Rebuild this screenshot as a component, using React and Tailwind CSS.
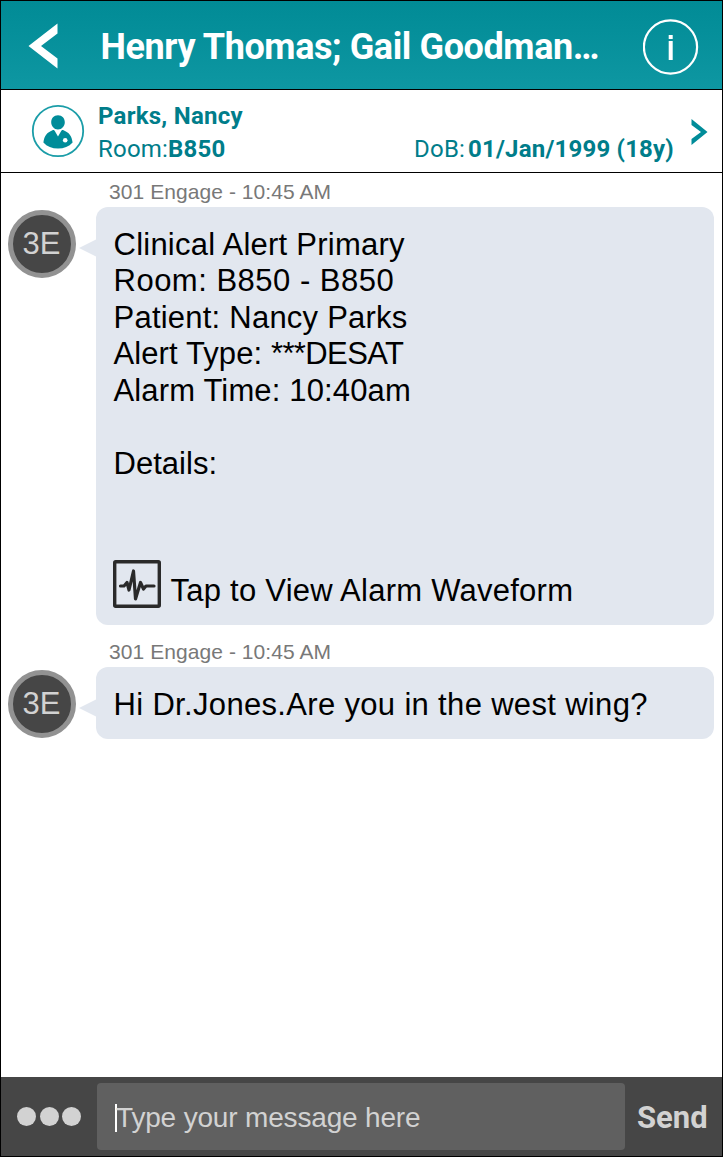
import React from 'react';

const alertLines = [
  { text: 'Clinical Alert Primary', tracking: 'tracking-[0.24px]' },
  { text: 'Room: B850 - B850', tracking: 'tracking-[0.5px]' },
  { text: 'Patient: Nancy Parks', tracking: 'tracking-[0.23px]' },
  { text: 'Alert Type: ', value: '***DESAT', tracking: 'tracking-[0.1px]' },
  { text: 'Alarm Time: 10:40am', tracking: 'tracking-[0.15px]' },
  { text: '\u00a0', tracking: '' },
  { text: 'Details:', tracking: 'tracking-[0.02px]' },
];

const PatientIcon = () => (
  <svg width="54" height="54" viewBox="0 0 54 54" className="shrink-0">
    <circle cx="27" cy="27" r="25.2" fill="none" stroke="#1b9da8" strokeWidth="1.8" />
    <path d="M27 11.2c4.200 0 6.800 3 6.800 7 0 4-3 7.200-6.800 7.200s-6.800-3.200-6.800-7.200c0-4 2.600-7 6.800-7z" fill="#008c99" />
    <path
      d="M21.500 26.200c1.200-.5 2 .1 2.600 1.200l2.900 5 2.900-5c.6-1.100 1.400-1.700 2.600-1.200 5.600 2.200 8.200 5.600 9.100 12.300-3.600 4-8.600 6.100-14.600 6.100s-11-2.100-14.600-6.100c.9-6.700 3.500-10.100 9.100-12.300z"
      fill="#008c99"
    />
    <circle cx="34.200" cy="36.300" r="2.300" fill="#fff" />
  </svg>
);

const WaveformIcon = () => (
  <svg width="48" height="48" viewBox="0 0 48 48" fill="none" stroke="#2a2a2a" className="-ml-px shrink-0">
    <rect x="1.700" y="1.700" width="44.600" height="44.600" rx="1" strokeWidth="3.400" />
    <path
      d="M7.500 26h3.500l3-3.500 2 7.500 4.500-19 2 28 5-16.500 3 6.500 2.500-3h8"
      strokeWidth="3.200"
      strokeLinecap="round"
      strokeLinejoin="round"
    />
  </svg>
);

const Message = ({ children }) => (
  <article>
    <div className="h-[34px] pl-[108px] text-[21px] leading-[38px] tracking-[0.07px] text-[#787878]">
      301 Engage - 10:45 AM
    </div>
    <div className="flex items-start pl-[6.500px]">
      <div className="mt-[2.500px] flex size-[68px] shrink-0 items-center justify-center rounded-full border-[5px] border-[#929292] bg-[#464646] pt-0.5 text-[31px] text-[#d2d2d2]">
        3E
      </div>
      <svg width="17" height="18" viewBox="0 0 17 18" className="mt-8 ml-[3.500px] shrink-0">
        <path d="M17 0.500L0 9l17 8.500z" fill="#e2e7ef" />
      </svg>
      <div className="w-[618px] rounded-xl bg-[#e2e7ef] pl-[17.500px] text-[31px] leading-[36.5px] text-black">
        {children}
      </div>
    </div>
  </article>
);

export default function App() {
  return (
    <div className="flex h-[1157px] w-[723px] flex-col overflow-hidden border border-black bg-white font-['Liberation_Sans',sans-serif]">
      <header className="flex h-[89px] shrink-0 items-center border-b border-black bg-linear-to-b from-[#018b96] to-[#0e97a2] font-[Roboto,sans-serif] text-white">
        <svg width="30" height="46" viewBox="0 0 30 46" className="mt-0.5 ml-[27px] shrink-0">
          <path d="M29.500 0.500v10L13 23l16.500 12.500v10L0.500 23z" fill="#fff" />
        </svg>
        <h1 className="mt-1 ml-[42.500px] w-[542.500px] text-[36px] leading-none font-bold tracking-[-0.4px] whitespace-nowrap">
          Henry Thomas; Gail Goodman…
        </h1>
        <svg width="56" height="56" viewBox="0 0 56 56" fill="none" className="mt-1 shrink-0">
          <circle cx="27.500" cy="28" r="26.600" stroke="#fff" strokeWidth="2.200" />
          <path d="M25.700 16h4v4h-4zM25.700 22h4v19h-4z" fill="#fff" />
        </svg>
      </header>

      <section className="flex h-[83px] shrink-0 items-center border-b border-black pl-[30px] font-[Roboto,sans-serif] text-[24px] text-[#007d8a]">
        <PatientIcon />
        <div className="mt-[3px] ml-[13px] w-[576px] leading-[33px]">
          <div className="font-bold tracking-[0.25px]">Parks, Nancy</div>
          <div className="flex justify-between tracking-[0.2px]">
            <span>Room:<b>B850</b></span>
            <span>DoB:<b className="ml-[3px]">01/Jan/1999 (18y)</b></span>
          </div>
        </div>
        <svg width="17" height="26" viewBox="0 0 17 26" className="mt-px ml-[17px] shrink-0">
          <path d="M0.500 0v6L10 13l-9.500 7v6L16.500 13z" fill="#008c99" />
        </svg>
      </section>

      <main className="grow">
        <Message>
          <div className="h-[418px] pt-[19.600px]">
            {alertLines.map((line, i) => (
              <p key={i} className={line.tracking}>
                {line.text}
                {line.value && <span className="tracking-[-0.6px]">{line.value}</span>}
              </p>
            ))}
            <div className="mt-[77.500px] flex">
              <WaveformIcon />
              <span className="mt-[13px] ml-2.5 tracking-[0.25px]">Tap to View Alarm Waveform</span>
            </div>
          </div>
        </Message>
        <div className="mt-2">
          <Message>
            <p className="h-[72px] pt-[19.600px] tracking-[0.33px]">Hi Dr.Jones.Are you in the west wing?</p>
          </Message>
        </div>
      </main>

      <footer className="flex h-[79px] shrink-0 items-center bg-[#464646] text-[#d2d2d2]">
        <div className="flex w-24 gap-[3.500px] pl-4">
          <span className="size-[19px] rounded-full bg-[#d2d2d2]" />
          <span className="size-[19px] rounded-full bg-[#d2d2d2]" />
          <span className="size-[19px] rounded-full bg-[#d2d2d2]" />
        </div>
        <div className="flex h-[67px] w-[528px] items-center rounded bg-[#606060] pl-[18px]">
          <span className="mt-0.5 h-7 w-0.5 bg-white" />
          <span className="mt-0.5 -ml-px text-[28px] tracking-[-0.17px]">Type your message here</span>
        </div>
        <button className="mt-1 ml-3 font-[Roboto,sans-serif] text-[31px] font-bold">Send</button>
      </footer>
    </div>
  );
}
